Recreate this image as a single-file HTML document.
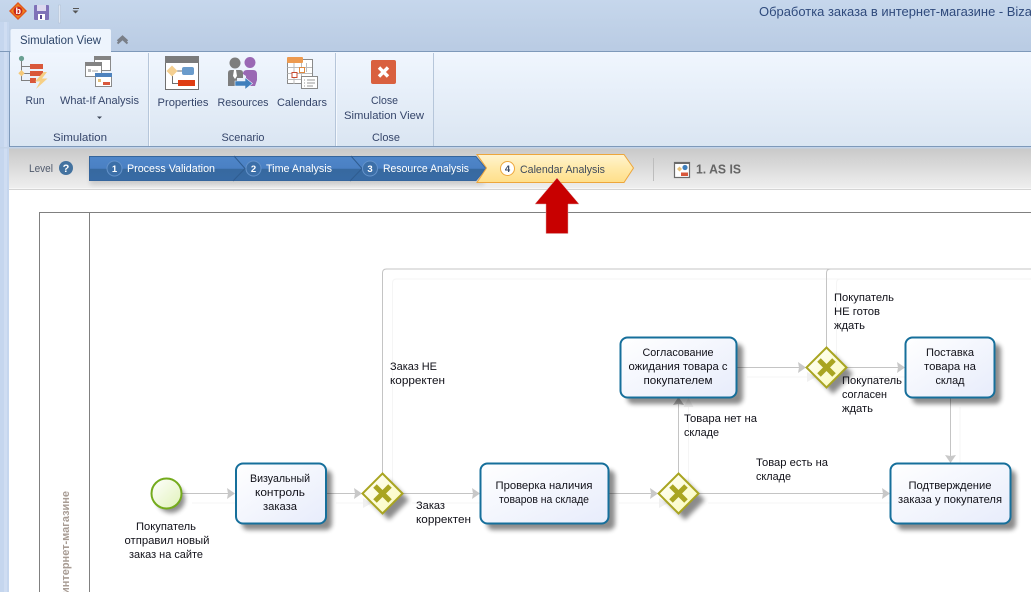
<!DOCTYPE html>
<html><head><meta charset="utf-8">
<style>
html,body{margin:0;padding:0;width:1031px;height:592px;overflow:hidden;background:#fff}
svg{display:block}
text{font-family:"Liberation Sans","Noto Sans CJK SC",sans-serif;font-size:11px}
.r{fill:#35456a}
.m{text-anchor:middle}
.b{fill:#fff;font-size:11px}
</style></head><body>
<svg width="1031" height="592" viewBox="0 0 1031 592" xmlns="http://www.w3.org/2000/svg">
<defs>
<linearGradient id="tb" x1="0" y1="0" x2="0" y2="1"><stop offset="0" stop-color="#c6d7ec"/><stop offset="1" stop-color="#b9cbe3"/></linearGradient>
<linearGradient id="rb" x1="0" y1="0" x2="0" y2="1"><stop offset="0" stop-color="#f0f6fe"/><stop offset="1" stop-color="#dae5f2"/></linearGradient>
<linearGradient id="lv" x1="0" y1="0" x2="0" y2="1"><stop offset="0" stop-color="#c9c9c9"/><stop offset="1" stop-color="#efefef"/></linearGradient>
<linearGradient id="bl" x1="0" y1="0" x2="0" y2="1"><stop offset="0" stop-color="#4f86c9"/><stop offset=".5" stop-color="#4a80c3"/><stop offset=".52" stop-color="#37699f"/><stop offset="1" stop-color="#376aa5"/></linearGradient>
<linearGradient id="ye" x1="0" y1="0" x2="0" y2="1"><stop offset="0" stop-color="#fff4d0"/><stop offset=".5" stop-color="#ffe9a8"/><stop offset="1" stop-color="#ffdf8a"/></linearGradient>
<linearGradient id="task" x1="0" y1="0" x2="1" y2="1"><stop offset="0" stop-color="#ffffff"/><stop offset="1" stop-color="#e7ecfb"/></linearGradient>
<linearGradient id="start" x1="0" y1="0" x2="1" y2="1"><stop offset="0" stop-color="#ffffff"/><stop offset="1" stop-color="#e0f2b8"/></linearGradient>
<linearGradient id="gw" x1="0" y1="0" x2="1" y2="1"><stop offset="0" stop-color="#ffffff"/><stop offset="1" stop-color="#fafab4"/></linearGradient>
<filter id="sh" x="-30%" y="-30%" width="170%" height="170%"><feGaussianBlur stdDeviation="2.5"/></filter>
</defs>

<!-- chrome -->
<rect width="1031" height="52" fill="url(#tb)"/>
<rect x="0" y="22" width="9" height="570" fill="#c5d6ee"/>
<rect x="4" y="22" width="3" height="570" fill="#cfddf2"/>

<!-- QAT -->
<path d="M18 2 L27 11 L18 20 L9 11Z" fill="#e2571c"/>
<path d="M18 4 L25 11 L18 18 L11 11Z" fill="#f08a20"/>
<circle cx="18" cy="11" r="4.5" fill="#c8261c"/>
<text x="15.5" y="14" style="font-size:9px;font-weight:bold" fill="#fff">b</text>
<rect x="34" y="5" width="15" height="15" rx="1" fill="#7f72b8"/>
<rect x="37" y="5" width="9" height="6" fill="#dcd9ef"/>
<rect x="38" y="14" width="7" height="6" fill="#fff"/>
<rect x="40" y="15" width="2" height="4" fill="#5b4b94"/>
<rect x="58.5" y="5" width="2" height="18" fill="#dfe7f2" stroke="#aebed4" stroke-width=".5"/>
<rect x="73" y="8" width="6" height="1" fill="#555"/>
<path d="M72.5 10.5 h6 l-3 3z" fill="#555"/>
<text x="759" y="16" style="font-size:13px" fill="#2f4a7c" textLength="273" lengthAdjust="spacingAndGlyphs">Обработка заказа в интернет-магазине - Biza</text>

<!-- ribbon -->
<rect x="9" y="51.5" width="1022" height="96" fill="url(#rb)"/>
<path d="M0 51.5 H1031" stroke="#7e99ba"/>
<path d="M9.5 52 V146.5 H1031" stroke="#7e99ba" fill="none"/>
<rect x="0" y="147" width="1031" height="1.5" fill="#c3d3e8"/>
<path d="M10.5 51.5 V31 q0-2 2-2 H109 q2 0 2 2 V51.5Z" fill="#edf4fd"/>
<path d="M10.5 52H111" stroke="#edf4fd"/>
<text x="20" y="44" class="r" textLength="81" lengthAdjust="spacingAndGlyphs" style="fill:#2d4569;font-size:11.5px">Simulation View</text>
<path d="M117.5 41 L122.5 36.5 L127.5 41 M117.5 43.5 L122.5 39 L127.5 43.5" stroke="#7a7f88" stroke-width="2" fill="none"/>
<path d="M148.5 53V146M335.5 53V146M433.5 53V146" stroke="#b6c6da"/>
<path d="M149.5 53V146M336.5 53V146" stroke="#f4f8fd"/>

<!-- Run icon -->
<circle cx="21.5" cy="58.5" r="2.6" fill="#6aa093"/>
<path d="M21.5 61 V66.5 H30 M21.5 61 V80.5 H30 M24 73.5 H30" stroke="#7f7f7f" fill="none"/>
<path d="M21.5 70 l3.2 3.2 l-3.2 3.2 l-3.2 -3.2z" fill="#f5c97a"/>
<rect x="30" y="64" width="13" height="5" fill="#d9583b"/>
<rect x="30" y="71" width="13" height="5" fill="#d9583b"/>
<rect x="30" y="78" width="6" height="5" fill="#d9583b"/>
<path d="M43.5 72 L35 81.5 H40 L36 89 L47.5 78.5 H42 L47 72Z" fill="#f6cf85"/>
<text x="35" y="104" class="m r" textLength="19" lengthAdjust="spacingAndGlyphs">Run</text>

<!-- What-if icon -->
<rect x="94.5" y="56.5" width="16" height="14" fill="#fff" stroke="#8a8a8a"/><rect x="94" y="56" width="17" height="4" fill="#838383"/>
<rect x="85.5" y="62.5" width="16" height="14" fill="#fff" stroke="#8a8a8a"/><rect x="85" y="62" width="17" height="4" fill="#838383"/>
<rect x="88" y="69" width="3" height="3" fill="#bbb"/><path d="M92 71H98" stroke="#aaa"/>
<rect x="95.5" y="73.5" width="16" height="13" fill="#fff" stroke="#8a8a8a"/><rect x="95" y="73" width="17" height="4" fill="#4e82bd"/>
<rect x="98" y="79" width="3" height="3" fill="#e5c27b"/><rect x="103" y="82" width="7" height="3" fill="#d9583b"/>
<text x="99.5" y="104" class="m r" textLength="79" lengthAdjust="spacingAndGlyphs">What-If Analysis</text>
<path d="M97 116.5h5l-2.5 2.5z" fill="#404a5c"/>
<text x="80" y="141" class="m r" textLength="54" lengthAdjust="spacingAndGlyphs">Simulation</text>

<!-- Properties icon -->
<rect x="165.5" y="56.5" width="33" height="33" fill="#fff" stroke="#707070"/>
<rect x="165" y="56" width="34" height="7" fill="#7b7b7b"/>
<path d="M172 71H182M172.5 76V83.5H178" stroke="#707070" fill="none"/>
<path d="M172 65.5l5.5 5.5l-5.5 5.5l-5.5-5.5z" fill="#f4cf90"/>
<rect x="182" y="67" width="12" height="8" rx="2" fill="#6a9bcb"/>
<rect x="178" y="80" width="17" height="6" fill="#df3c12"/>
<text x="183" y="106" class="m r" textLength="51" lengthAdjust="spacingAndGlyphs">Properties</text>

<!-- Resources icon -->
<circle cx="235" cy="63" r="5.5" fill="#7d7d7d"/>
<path d="M228 86 V73 q0-3 3-3 h9 q3 0 3 3 V78 h-6 v8z" fill="#7d7d7d"/>
<path d="M234 70h2l1 6l-2 3l-2-3z" fill="#fff"/>
<circle cx="250" cy="62.5" r="5.5" fill="#9a68b4"/>
<path d="M243 74 q0-4 4-4 h6 q4 0 4 4 V80 l-2 6 h-9 v-10z" fill="#9a68b4"/>
<path d="M235 81 H245 V77.5 L252.5 83.5 L245 89.5 V86 H235Z" fill="#3f7fbc" stroke="#f0f5fb" stroke-width=".6"/>
<text x="243" y="106" class="m r" textLength="51" lengthAdjust="spacingAndGlyphs">Resources</text>

<!-- Calendars icon -->
<rect x="287.5" y="59.5" width="25" height="24" fill="#fff" stroke="#8a8a8a"/>
<rect x="287" y="57" width="16" height="6" rx="1" fill="#ed9a4f"/>
<path d="M287.5 67.5H312M287.5 73.5H312M287.5 79.5H304M294 63V84M301.5 63V84M306.5 63V72" stroke="#bcbcbc" fill="none"/>
<rect x="299.5" y="67.5" width="5" height="5" fill="#fff" stroke="#e08a40"/>
<rect x="292" y="72.5" width="5" height="5" fill="#fff" stroke="#c9482c"/>
<rect x="301.5" y="76.5" width="16" height="12" fill="#fff" stroke="#8a8a8a"/>
<path d="M304 80h1M307 80h8M304 83h1M307 83h8M304 86h1M307 86h6" stroke="#9a9a9a" fill="none"/>
<text x="302" y="106" class="m r" textLength="50" lengthAdjust="spacingAndGlyphs">Calendars</text>
<text x="243" y="141" class="m r" textLength="43" lengthAdjust="spacingAndGlyphs">Scenario</text>

<!-- Close -->
<rect x="371" y="60" width="25" height="24" rx="2" fill="#d9603f"/>
<path d="M379 67.5 L388 76.5 M388 67.5 L379 76.5" stroke="#fff" stroke-width="3.4"/>
<text x="384.5" y="104" class="m r" textLength="27" lengthAdjust="spacingAndGlyphs">Close</text>
<text x="384" y="119" class="m r" textLength="80" lengthAdjust="spacingAndGlyphs">Simulation View</text>
<text x="386" y="141" class="m r" textLength="28" lengthAdjust="spacingAndGlyphs">Close</text>

<!-- level bar -->
<rect x="9" y="148.5" width="1022" height="40" fill="url(#lv)"/>
<rect x="9" y="189" width="1022" height="1" fill="#d4d4d4"/>
<text x="29" y="172" fill="#505a6c" textLength="24" lengthAdjust="spacingAndGlyphs">Level</text>
<circle cx="66" cy="168" r="7" fill="#43729f"/>
<text x="66" y="172" class="m" fill="#fff" style="font-size:11px;font-weight:bold">?</text>

<!-- steps -->
<rect x="90" y="160" width="394" height="25" fill="#000" opacity=".12" filter="url(#sh)"/>
<path d="M89.5 156.5 H476 L486 168.5 L476 180.5 H89.5Z" fill="url(#bl)" stroke="#35659c"/>
<path d="M234 156 L245 168.5 L233 181 M351 156 L362 168.5 L350 181" stroke="#2f5c8f" fill="none"/>
<circle cx="114.5" cy="168.5" r="7.5" fill="#3c6fa8" stroke="#6493cb"/>
<text x="114.5" y="172" class="b m" style="font-size:9.5px;font-weight:bold">1</text>
<text x="127" y="172" class="b" textLength="88" lengthAdjust="spacingAndGlyphs">Process Validation</text>
<circle cx="253.5" cy="168.5" r="7.5" fill="#3c6fa8" stroke="#6493cb"/>
<text x="253.5" y="172" class="b m" style="font-size:9.5px;font-weight:bold">2</text>
<text x="266" y="172" class="b" textLength="66" lengthAdjust="spacingAndGlyphs">Time Analysis</text>
<circle cx="370" cy="168.5" r="7.5" fill="#3c6fa8" stroke="#6493cb"/>
<text x="370" y="172" class="b m" style="font-size:9.5px;font-weight:bold">3</text>
<text x="383" y="172" class="b" textLength="86" lengthAdjust="spacingAndGlyphs">Resource Analysis</text>
<path d="M477 154.5 H624 L633.5 168 L624 182.5 H477 L486.5 168Z" fill="url(#ye)" stroke="#eda63c"/>
<circle cx="507.5" cy="168.5" r="7" fill="#fff" stroke="#eda63c"/>
<text x="507.5" y="172" class="m" style="font-size:9.5px;font-weight:bold" fill="#3a4a66">4</text>
<text x="520" y="173" fill="#3f4a5c" textLength="85" lengthAdjust="spacingAndGlyphs">Calendar Analysis</text>
<rect x="653" y="158" width="1" height="23" fill="#bdbdbd"/>
<rect x="674.5" y="162.5" width="15" height="15" fill="#fff" stroke="#6b6b6b" stroke-width="1.2"/>
<rect x="674" y="162" width="16" height="2" fill="#6b6b6b"/>
<path d="M677 169l2.5-2.5l2.5 2.5l-2.5 2.5z" fill="#e8c27a"/><circle cx="685" cy="167.5" r="2.6" fill="#3f7fbc"/><rect x="681" y="172.5" width="7" height="3.5" fill="#d9583b"/>
<text x="696" y="173.5" style="font-size:13px;font-weight:bold" fill="#666" textLength="45" lengthAdjust="spacingAndGlyphs">1. AS IS</text>

<!-- pool -->
<path d="M39.5 592 V212.5 H1031 M89.5 212.5 V592" stroke="#808080" fill="none"/>
<text transform="translate(69,594) rotate(-90)" x="0" y="0" style="font-size:11px;font-weight:bold" fill="#a89c94" textLength="103" lengthAdjust="spacingAndGlyphs">интернет-магазине</text>

<!-- ghost connectors -->
<g stroke="#f5f5f5" fill="none">
<path d="M192 503H245M336 503H372M412 503H490M619 503H668M708 503H900M747 377H816M856 377H915M960 407V473"/>
<path d="M392.5 483V283q0-4 4-4H1031M688.5 483V407M836.5 357V283q0-4 4-4H1031"/>
</g>
<g fill="#f0f0f0">
<path d="M683.5 407l5-9 5 9z"/><path d="M807 372l9 5-9 5z"/><path d="M363 498l9 5-9 5z"/><path d="M659 498l9 5-9 5z"/>
</g>

<!-- connectors -->
<g stroke="#c4c4c4" fill="none">
<path d="M182 493.5H228M326 493.5H356M402 493.5H474M609 493.5H652M698 493.5H884M737 367.5H800M846 367.5H899"/>
<path d="M950.5 397V456M678.5 473V404"/>
<path d="M382.5 473V273q0-4 4-4H1031M826.5 347V273q0-4 4-4"/>
</g>
<g fill="#c8c8c8">
<path d="M227 488l8 5.5-8 5.5 1-5.5z"/><path d="M354 488l8 5.5-8 5.5 1-5.5z"/><path d="M472 488l8 5.5-8 5.5 1-5.5z"/>
<path d="M650 488l8 5.5-8 5.5 1-5.5z"/><path d="M882 488l8 5.5-8 5.5 1-5.5z"/><path d="M798 362l8 5.5-8 5.5 1-5.5z"/>
<path d="M897 362l8 5.5-8 5.5 1-5.5z"/><path d="M945 455l5.5 8 5.5-8-5.5 1z"/>
</g>
<path d="M673 405l5.5-8 5.5 8-5.5-1z" fill="#b4b4b4"/>

<!-- shadows -->
<g fill="#000" opacity=".45" filter="url(#sh)">
<circle cx="171" cy="499" r="14"/>
<rect x="242" y="470" width="90" height="60" rx="6"/>
<rect x="487" y="470" width="128" height="60" rx="6"/>
<rect x="627" y="344" width="116" height="60" rx="6"/>
<rect x="912" y="344" width="89" height="60" rx="6"/>
<rect x="897" y="470" width="119" height="60" rx="6"/>
<path d="M389 480l20 20-20 20-20-20z"/><path d="M685 480l20 20-20 20-20-20z"/><path d="M833 354l20 20-20 20-20-20z"/>
</g>

<!-- start -->
<circle cx="166.5" cy="493.5" r="15" fill="url(#start)" stroke="#74ab1c" stroke-width="2"/>

<!-- tasks -->
<g fill="url(#task)" stroke="#166f9b" stroke-width="2">
<rect x="236" y="463.5" width="90" height="60" rx="7"/>
<rect x="480.5" y="463.5" width="128" height="60" rx="7"/>
<rect x="620.5" y="337.5" width="116" height="60" rx="7"/>
<rect x="905.5" y="337.5" width="89" height="60" rx="7"/>
<rect x="890.5" y="463.5" width="120" height="60" rx="7"/>
</g>

<!-- gateways -->
<g fill="url(#gw)" stroke="#a9a521" stroke-width="2">
<path d="M382.5 473.5l20 20-20 20-20-20z"/>
<path d="M678.5 473.5l20 20-20 20-20-20z"/>
<path d="M826.5 347.5l20 20-20 20-20-20z"/>
</g>
<g stroke="#a9a521" stroke-width="5" fill="none">
<path d="M375 486l15 15m0-15l-15 15"/>
<path d="M671 486l15 15m0-15l-15 15"/>
<path d="M819 360l15 15m0-15l-15 15"/>
</g>

<!-- diagram text -->
<g fill="#101018">
<text class="m" x="166" y="530" textLength="60" lengthAdjust="spacingAndGlyphs">Покупатель</text>
<text class="m" x="167" y="544" textLength="85" lengthAdjust="spacingAndGlyphs">отправил новый</text>
<text class="m" x="166" y="558" textLength="74" lengthAdjust="spacingAndGlyphs">заказ на сайте</text>
<text class="m" x="280" y="482" textLength="60" lengthAdjust="spacingAndGlyphs">Визуальный</text>
<text class="m" x="280" y="496" textLength="50" lengthAdjust="spacingAndGlyphs">контроль</text>
<text class="m" x="280" y="510" textLength="34" lengthAdjust="spacingAndGlyphs">заказа</text>
<text x="416" y="509" textLength="29" lengthAdjust="spacingAndGlyphs">Заказ</text>
<text x="416" y="523" textLength="55" lengthAdjust="spacingAndGlyphs">корректен</text>
<text x="390" y="370" textLength="47" lengthAdjust="spacingAndGlyphs">Заказ НЕ</text>
<text x="390" y="384" textLength="55" lengthAdjust="spacingAndGlyphs">корректен</text>
<text class="m" x="544" y="489" textLength="97" lengthAdjust="spacingAndGlyphs">Проверка наличия</text>
<text class="m" x="544" y="503" textLength="90" lengthAdjust="spacingAndGlyphs">товаров на складе</text>
<text class="m" x="678" y="356" textLength="71" lengthAdjust="spacingAndGlyphs">Согласование</text>
<text class="m" x="678" y="370" textLength="99" lengthAdjust="spacingAndGlyphs">ожидания товара с</text>
<text class="m" x="678" y="384" textLength="69" lengthAdjust="spacingAndGlyphs">покупателем</text>
<text x="684" y="422" textLength="73" lengthAdjust="spacingAndGlyphs">Товара нет на</text>
<text x="684" y="436" textLength="35" lengthAdjust="spacingAndGlyphs">складе</text>
<text x="756" y="466" textLength="72" lengthAdjust="spacingAndGlyphs">Товар есть на</text>
<text x="756" y="480" textLength="35" lengthAdjust="spacingAndGlyphs">складе</text>
<text x="834" y="301" textLength="60" lengthAdjust="spacingAndGlyphs">Покупатель</text>
<text x="834" y="315" textLength="46" lengthAdjust="spacingAndGlyphs">НЕ готов</text>
<text x="834" y="329" textLength="31" lengthAdjust="spacingAndGlyphs">ждать</text>
<text x="842" y="384" textLength="60" lengthAdjust="spacingAndGlyphs">Покупатель</text>
<text x="842" y="398" textLength="45" lengthAdjust="spacingAndGlyphs">согласен</text>
<text x="842" y="412" textLength="31" lengthAdjust="spacingAndGlyphs">ждать</text>
<text class="m" x="950" y="356" textLength="48" lengthAdjust="spacingAndGlyphs">Поставка</text>
<text class="m" x="950" y="370" textLength="52" lengthAdjust="spacingAndGlyphs">товара на</text>
<text class="m" x="950" y="384" textLength="29" lengthAdjust="spacingAndGlyphs">склад</text>
<text class="m" x="950" y="489" textLength="83" lengthAdjust="spacingAndGlyphs">Подтверждение</text>
<text class="m" x="950" y="503" textLength="104" lengthAdjust="spacingAndGlyphs">заказа у покупателя</text>
</g>

<!-- red arrow -->
<path d="M557 178 L579 204 H568 V233.5 H546 V204 H535Z" fill="#c80000" stroke="#d9a0a0" stroke-width=".5"/>
</svg>
</body></html>
